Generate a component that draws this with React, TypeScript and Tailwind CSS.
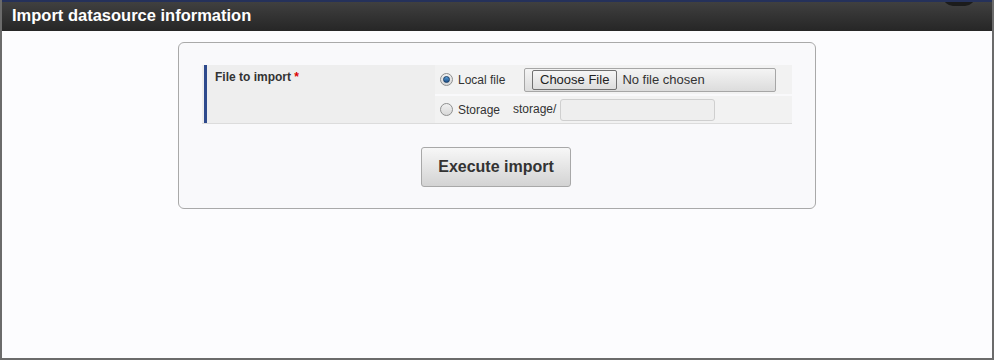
import React from 'react';

const Radio = ({ checked }: { checked?: boolean }) => (
  <span className="relative inline-flex h-[13px] w-[13px] items-center justify-center rounded-full border border-[#8e8f8f] bg-gradient-to-b from-[#f0f0f0] to-[#d8d8d8]">
    {checked && (
      <span className="h-[7px] w-[7px] rounded-full bg-gradient-to-b from-[#5a9fd8] to-[#1c4f8a] border border-[#173d66]" />
    )}
  </span>
);

export default function App() {
  return (
    <div className="h-[360px] w-[994px] overflow-hidden bg-[#fcfcfe] font-['Liberation_Sans',Arial,sans-serif] border-x-2 border-b-2 border-[#6b6b6b]">
      {/* Header */}
      <div className="-mx-[2px]">
        <div className="h-[2px] bg-[#25315a]" />
        <div className="relative h-[29px] overflow-hidden bg-gradient-to-b from-[#404040] to-[#262626] px-[12px] flex items-center">
          <h1 className="text-[16.5px] font-bold text-white leading-none mt-[-2px]">Import datasource information</h1>
          <div className="absolute right-[19px] top-[-16px] h-[20px] w-[32px] rounded-full bg-[#1c1c1c]" />
        </div>
      </div>

      {/* Panel */}
      <div className="flex justify-center pt-[11px]">
        <div className="w-[638px] h-[167px] rounded-[6px] border border-[#a9a9a9] bg-[#f9f9fb] px-[23px] pt-[22px]">
          <div className="flex border-b border-[#dcdcdc]">
            <div className="w-[233px] h-[58px] bg-[#eeeeee] pl-[2px]">
              <div className="h-full border-l-[3px] border-[#2e4a8c] pl-[8px] pt-[3px] text-[12px] font-bold text-[#333]">
                File to import <span className="text-[#d00]">*</span>
              </div>
            </div>
            <div className="flex-1 flex flex-col gap-[2px] text-[12px] text-[#333]">
              <div className="h-[29px] bg-[#f2f2f2] flex items-center pl-[5px]">
                <Radio checked />
                <span className="ml-[5px] w-[66px]">Local file</span>
                <div className="w-[252px] h-[24px] rounded-[2px] border border-[#a6a6a6] bg-gradient-to-b from-[#f4f4f4] to-[#dcdcdc] flex items-center pl-[7px]">
                  <span className="h-[20px] px-[7px] rounded-[2px] border border-[#707070] bg-gradient-to-b from-[#f6f6f6] to-[#dddddd] text-[13px] text-[#222] flex items-center">Choose File</span>
                  <span className="ml-[5px] text-[13px] text-[#333]">No file chosen</span>
                </div>
              </div>
              <div className="h-[27px] bg-[#f2f2f2] flex items-center pl-[5px]">
                <Radio />
                <span className="ml-[5px] w-[55px]">Storage</span>
                <span className="self-start mt-[4px]">storage/</span>
                <div className="ml-[4px] w-[155px] h-[22px] rounded-[3px] border border-[#cfcfcf] bg-[#eeeeee]" />
              </div>
            </div>
          </div>
          <div className="flex justify-center pt-[23px]">
            <button className="w-[150px] h-[40px] rounded-[3px] border border-[#a8a8a8] bg-gradient-to-b from-[#f7f7f7] to-[#d3d3d3] text-[16px] font-bold text-[#333] -ml-[2px]">
              Execute import
            </button>
          </div>
        </div>
      </div>
    </div>
  );
}
